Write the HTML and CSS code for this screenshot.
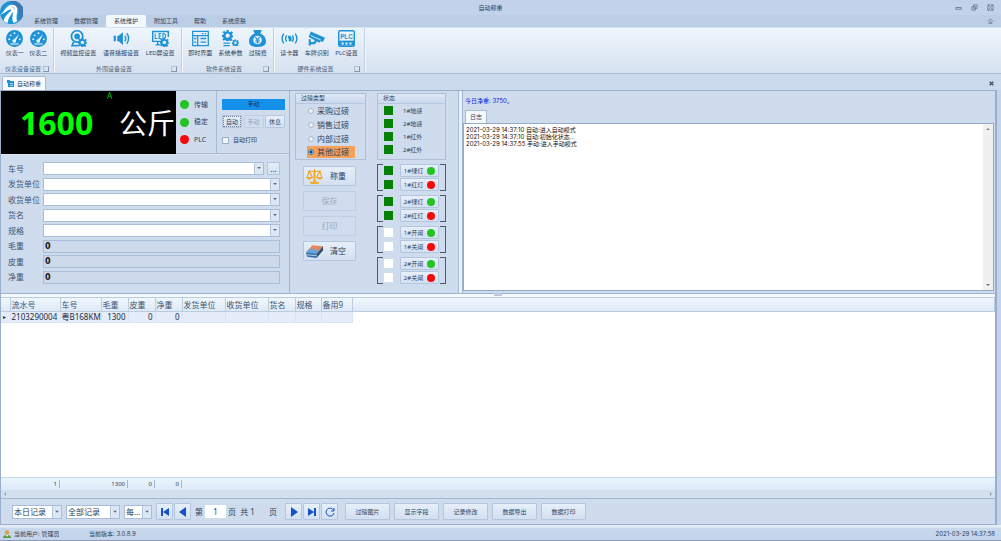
FILE: index.html
```html
<!doctype html>
<html lang="zh-CN">
<head>
	<meta charset="UTF-8">
	<title>自动称重</title>
	<link rel="stylesheet" href="styles.css">
</head>
<body>
<svg class="defs" aria-hidden="true">
	<symbol id="i-gauge" viewBox="0 0 24 24"><circle cx="12" cy="12" r="12" fill="#1f93d6"/><g fill="#e8f3fc"><circle cx="4.5" cy="13" r="1.3"/><circle cx="6.5" cy="7.5" r="1.3"/><circle cx="12" cy="4.5" r="1.3"/><circle cx="19.5" cy="13" r="1.3"/><path d="M18.5 5.5l-4.400 9.200a2.600 2.600 0 1 1-2.600-1.800z"/><path d="M6 19h12v1.500H6z"/></g></symbol>
	<symbol id="i-gear" viewBox="0 0 24 24"><path d="M9.500 0h5v4l2.500 1 3-2.500L23.500 6 21 9l1 2.500h2v4h-3l-1 2.500 2 3-3 3-3-2-2 1v1h-5v-2l-2.500-1-3 2L1 20l2-3-1-2H0v-5h3l1-2.500L1 5l3.500-3.500L7.500 4l2-1z" fill="#1f93d6"/><circle cx="12" cy="12" r="4.500" fill="#eaf2fb"/></symbol>
	<symbol id="i-cam" viewBox="0 0 24 24"><circle cx="10" cy="9" r="8" fill="none" stroke="#1f93d6" stroke-width="2.500"/><circle cx="10" cy="9" r="4" fill="#1f93d6"/><path d="M5 17l-2 5h9" fill="none" stroke="#1f93d6" stroke-width="2.500"/><use href="#i-gear" x="11" y="11" width="13" height="13"/></symbol>
	<symbol id="i-sound" viewBox="0 0 24 24"><path d="M1 8h3v8H1zM6 8h2l6-5v18l-6-5H6z" fill="#1f93d6"/><path d="M16.500 8q3 4 0 8M19.500 4.500q5 7.500 0 15" fill="none" stroke="#1f93d6" stroke-width="2"/></symbol>
	<symbol id="i-led" viewBox="0 0 24 24"><path d="M13 16H1V2h22v8M5 21h7M8 16v5" fill="none" stroke="#1f93d6" stroke-width="2"/><path d="M4.500 5v7H8M13 5h-3v7h3M10 8.500h3M15.500 5v7c5 0 5-7 0-7z" fill="none" stroke="#1f93d6" stroke-width="1.500"/><use href="#i-gear" x="11" y="11" width="13" height="13"/></symbol>
	<symbol id="i-form" viewBox="0 0 24 24"><path d="M1 2h22v20H1zM1 8h22M8 8v14M12 12h8M12 17h8M3 12h3M3 17h3M14 5h2M18 5h2" fill="none" stroke="#1f93d6" stroke-width="1.800"/></symbol>
	<symbol id="i-gears" viewBox="0 0 24 24"><use href="#i-gear" x="0" y="0" width="16" height="16"/><use href="#i-gear" x="14" y="13" width="10" height="10"/><path d="M2 18.500h9M2 22h9" stroke="#1f93d6" stroke-width="1.800"/></symbol>
	<symbol id="i-fee" viewBox="0 0 24 24"><path d="M6 0h12l-2 5c5 2 8 6 8 11 0 6-5 8-12 8S0 22 0 16C0 11 3 7 8 5z" fill="#1f93d6"/><circle cx="12" cy="14" r="6" fill="#eaf2fb"/><path d="M9 10l3 4 3-4M12 14v5M9 14.500h6M9 17h6" fill="none" stroke="#1f93d6" stroke-width="1.600"/></symbol>
	<symbol id="i-reader" viewBox="0 0 24 24"><path d="M4 5Q-1 12 4 19M8 7.500q-3 4.500 0 9M16 7.500q3 4.500 0 9M20 5q5 7 0 14" fill="none" stroke="#1f93d6" stroke-width="2"/><path d="M10 8h3l2 3v5h-4v-4h-1z" fill="#1f93d6"/></symbol>
	<symbol id="i-cctv" viewBox="0 0 24 24"><path d="M4 2l20 9-3 6-3-1-2 2L1 10zM1 13h3v9H1zM4 17h4l2-3 3 1-3 5H4z" fill="#1f93d6"/><path d="M4 8l14 6" stroke="#eaf2fb" stroke-width="1.200"/></symbol>
</svg>

<header class="titlebar">
	<h1>自动称重</h1>
	<div class="winbtns">
		<button type="button" aria-label="最小化"><svg viewBox="0 0 8 8"><path d="M1 4h6v2H1z"/></svg></button>
		<button type="button" aria-label="还原"><svg viewBox="0 0 8 8"><path d="M3 1h4v4H3zM1 3h4v4H1z"/></svg></button>
		<button type="button" aria-label="关闭"><svg viewBox="0 0 8 8"><path d="M1 1h6v6H1zM1 1l6 6M7 1L1 7"/></svg></button>
	</div>
	<svg class="logo" viewBox="0 0 24 24"><circle cx="12" cy="12" r="12" fill="#1a94d6"/><path d="M9 0a12 12 0 0 1 11 21C22 12 18 5 9 0z" fill="#3c78b4"/><path d="M0 14C5 12 5 5 12 4c5 0 7 3 6 8-1 4-1 7 0 9l-4 2c-2-4-1-8 0-12-2 3-5 5-6 12l-4-2c0-5 5-8 8-12-4-1-6 4-12 5z" fill="#fff"/><path d="M12 6q3 0 3 3" fill="none" stroke="#8cc8ea" stroke-width="1"/></svg>
</header>

<nav class="tabs">
	<a href="#">系统管理</a>
	<a href="#">数据管理</a>
	<a href="#" class="cur">系统维护</a>
	<a href="#">附加工具</a>
	<a href="#">帮助</a>
	<a href="#">系统皮肤</a>
	<button type="button" class="fold" aria-label="折叠"><svg viewBox="0 0 8 8"><path d="M1 4l3-3 3 3M2 6l2-2 2 2z"/></svg></button>
</nav>

<div class="ribbon">
	<section class="rgroup meter">
		<div class="items">
			<button type="button"><svg><use href="#i-gauge"/></svg>仪表一</button>
			<button type="button"><svg><use href="#i-gauge"/></svg>仪表二</button>
		</div>
		<h2>仪表设备设置</h2>
	</section>
	<section class="rgroup device">
		<div class="items">
			<button type="button"><svg><use href="#i-cam"/></svg>视频监控设置</button>
			<button type="button"><svg><use href="#i-sound"/></svg>语音播报设置</button>
			<button type="button"><svg><use href="#i-led"/></svg>LED屏设置</button>
		</div>
		<h2>外围设备设置</h2>
	</section>
	<section class="rgroup soft">
		<div class="items">
			<button type="button"><svg><use href="#i-form"/></svg>即时界面</button>
			<button type="button"><svg><use href="#i-gears"/></svg>系统参数</button>
			<button type="button"><svg><use href="#i-fee"/></svg>过磅费</button>
		</div>
		<h2>软件系统设置</h2>
	</section>
	<section class="rgroup hard">
		<div class="items">
			<button type="button"><svg><use href="#i-reader"/></svg>读卡器</button>
			<button type="button"><svg><use href="#i-cctv"/></svg>车牌识别</button>
			<button type="button"><svg viewBox="0 0 24 24"><rect x="1" y="1" width="22" height="22" rx="2" fill="#eaf2fb" stroke="#1f93d6" stroke-width="2"/><path d="M1 15h22v7H1z" fill="#1f93d6"/><path d="M5 17.500h3v3H5zM10.500 17.500h3v3h-3zM16 17.500h3v3h-3z" fill="#eaf2fb"/><text x="12" y="12" text-anchor="middle" class="plc-text">PLC</text></svg>PLC设置</button>
		</div>
		<h2>硬件系统设置</h2>
	</section>
</div>

<div class="doctabs">
	<a href="#" class="cur"><svg viewBox="0 0 8 8"><path d="M0 0h3v1h4v6H1V3H0z" fill="#1f93d6"/><path d="M3 3.500h3M3 5.500h3" stroke="#fff" stroke-width=".6"/></svg>自动称重</a>
	<button type="button" aria-label="关闭页面"><svg viewBox="0 0 8 8"><path d="M2 2l4 4M6 2L2 6"/></svg></button>
</div>

<main>
	<div class="work">
		<div class="left">
			<div class="top">
				<div class="led">
					<span class="flag">A</span>
					<strong>1600</strong>
					<span class="unit">公斤</span>
				</div>
				<ul class="lamps">
					<li><i class="lamp on"></i>传输</li>
					<li><i class="lamp on"></i>稳定</li>
					<li><i class="lamp"></i>PLC</li>
				</ul>
				<div class="mode">
					<p>手动</p>
					<div class="modebtns">
						<button type="button" class="btn focus">自动</button>
						<button type="button" class="btn" disabled>手动</button>
						<button type="button" class="btn">休息</button>
					</div>
					<label><input type="checkbox">自动打印</label>
				</div>
			</div>
			<form class="fields">
				<div class="field"><label for="car">车号</label><select id="car"><option></option></select><button type="button" class="btn more">...</button></div>
				<div class="field"><label for="sender">发货单位</label><select id="sender"><option></option></select></div>
				<div class="field"><label for="receiver">收货单位</label><select id="receiver"><option></option></select></div>
				<div class="field"><label for="goods">货名</label><select id="goods"><option></option></select></div>
				<div class="field"><label for="spec">规格</label><select id="spec"><option></option></select></div>
				<div class="field"><label for="gross">毛重</label><input type="text" id="gross" value="0" readonly></div>
				<div class="field"><label for="tare">皮重</label><input type="text" id="tare" value="0" readonly></div>
				<div class="field"><label for="net">净重</label><input type="text" id="net" value="0" readonly></div>
			</form>
		</div>

		<div class="middle">
			<div class="ops">
				<fieldset class="box types">
					<legend>过磅类型</legend>
					<label><input type="radio" name="type">采购过磅</label>
					<label><input type="radio" name="type">销售过磅</label>
					<label><input type="radio" name="type">内部过磅</label>
					<label class="sel"><input type="radio" name="type" checked>其他过磅</label>
				</fieldset>
				<div class="actions">
					<button type="button" class="btn"><svg viewBox="0 0 16 16"><g fill="none" stroke="#f0a020" stroke-width="1"><path d="M8 1v12M2 3h12M3 3L1 9h5zM13 3l-3 6h5z"/></g><path d="M0 9h6q-3 4-6 0zM10 9h6q-3 4-6 0zM4 13h8v2H4zM7 3h2v10H7z" fill="#f5ab2c"/></svg>称重</button>
					<button type="button" class="btn" disabled>保存</button>
					<button type="button" class="btn" disabled>打印</button>
					<button type="button" class="btn"><svg viewBox="0 0 16 16"><path d="M6 2l10 1-6 7-10-1z" fill="#e08a5c"/><path d="M3 5.500l9 1-2 3.500-10-1z" fill="#6aa5dc"/><path d="M0 9l10 1v4L1 13z" fill="#2f6fae"/><path d="M10 10l6-7v4l-6 7z" fill="#344e74"/><path d="M1 11l9 1" stroke="#cfe2f4" stroke-width=".8"/></svg>清空</button>
				</div>
			</div>
			<div class="signals">
				<fieldset class="box states">
					<legend>状态</legend>
					<p><i class="sq"></i>1#地感</p>
					<p><i class="sq"></i>2#地感</p>
					<p><i class="sq"></i>1#红外</p>
					<p><i class="sq"></i>2#红外</p>
				</fieldset>
				<div class="pair">
					<p><i class="sq"></i><button type="button" class="btn">1#绿灯<i class="lamp on"></i></button></p>
					<p><i class="sq"></i><button type="button" class="btn">1#红灯<i class="lamp"></i></button></p>
				</div>
				<div class="pair">
					<p><i class="sq"></i><button type="button" class="btn">2#绿灯<i class="lamp on"></i></button></p>
					<p><i class="sq"></i><button type="button" class="btn">2#红灯<i class="lamp"></i></button></p>
				</div>
				<div class="pair">
					<p><i class="sq off"></i><button type="button" class="btn">1#开闸<i class="lamp on"></i></button></p>
					<p><i class="sq off"></i><button type="button" class="btn">1#关闸<i class="lamp"></i></button></p>
				</div>
				<div class="pair">
					<p><i class="sq off"></i><button type="button" class="btn">2#开闸<i class="lamp on"></i></button></p>
					<p><i class="sq off"></i><button type="button" class="btn">2#关闸<i class="lamp"></i></button></p>
				</div>
			</div>
		</div>

		<div class="vsplit"></div>

		<div class="right">
			<p class="today">今日净重: 3750。</p>
			<div class="logtab"><a href="#">日志</a></div>
			<div class="log">
				<textarea readonly aria-label="日志">2021-03-29 14:37:10 自动:进入自动模式
2021-03-29 14:37:10 自动:初始化状态...
2021-03-29 14:37:55 手动:进入手动模式</textarea>
				<div class="vbar"><i class="up"></i><i class="down"></i></div>
			</div>
		</div>
	</div>

	<div class="hsplit"></div>

	<div class="grid">
		<table>
			<thead>
				<tr><th class="c-mark"></th><th class="c-no">流水号</th><th class="c-car">车号</th><th class="c-num">毛重</th><th class="c-num">皮重</th><th class="c-num">净重</th><th class="c-unit">发货单位</th><th class="c-unit">收货单位</th><th class="c-num">货名</th><th class="c-spec">规格</th><th class="c-spare">备用9</th><th></th></tr>
			</thead>
			<tbody>
				<tr><td class="mark">▸</td><td>2103290004</td><td>粤B168KM</td><td class="num">1300</td><td class="num">0</td><td class="num">0</td><td></td><td></td><td></td><td></td><td></td><td class="rest"></td></tr>
			</tbody>
		</table>
		<div class="sums">
			<span class="s-no">1</span><span class="s-gross">1300</span><span class="s-num">0</span><span class="s-num">0</span>
		</div>
		<div class="hbar"><i class="prev"></i><i class="next"></i></div>
	</div>

	<div class="pager">
		<select class="day" aria-label="日期范围"><option>本日记录</option></select>
		<select class="all" aria-label="记录范围"><option>全部记录</option></select>
		<select class="per" aria-label="每页"><option>每...</option></select>
		<div class="turn">
			<button type="button" class="btn" aria-label="首页"><svg viewBox="0 0 10 10"><path d="M1 1h2v8H1zM9 1v8L3 5z"/></svg></button>
			<button type="button" class="btn" aria-label="上一页"><svg viewBox="0 0 10 10"><path d="M8 0v10L1 5z"/></svg></button>
		</div>
		<label for="page">第</label>
		<input type="text" id="page" value="1">
		<span class="total">页&nbsp; 共 1</span>
		<span class="total-end">页</span>
		<div class="turn">
			<button type="button" class="btn" aria-label="下一页"><svg viewBox="0 0 10 10"><path d="M2 0v10l7-5z"/></svg></button>
			<button type="button" class="btn" aria-label="末页"><svg viewBox="0 0 10 10"><path d="M7 1h2v8H7zM1 1v8l6-4z"/></svg></button>
			<button type="button" class="btn" aria-label="刷新"><svg viewBox="0 0 10 10"><path d="M8.500 3A4 4 0 1 0 9 6M9 1v3H6" class="line"/></svg></button>
		</div>
		<div class="cmds">
			<button type="button" class="btn">过磅图片</button>
			<button type="button" class="btn">显示字段</button>
			<button type="button" class="btn">记录修改</button>
			<button type="button" class="btn">数据导出</button>
			<button type="button" class="btn">数据打印</button>
		</div>
	</div>
</main>

<footer class="status">
	<svg viewBox="0 0 8 8"><circle cx="4" cy="2.500" r="2.200" fill="#d9a441"/><path d="M0 8q0-3 4-3t4 3z" fill="#5c9c3c"/><path d="M3 5h2L4 7z" fill="#fff"/></svg>
	<span class="user">当前用户: 管理员</span>
	<span>当前版本: 3.0.8.9</span>
	<time>2021-03-29 14:37:58</time>
</footer>
</body>
</html>
```
FILE: styles.css
```css
*{
	margin: 0;
	padding: 0;
	box-sizing: border-box;
}
body {
	height: 100vh;
	display: flex;
	flex-direction: column;
	overflow: hidden;
	background: #c3d3ea;
	color: #2b3f5c;
	font: 6px/8px "Noto Sans", "Noto Sans CJK SC", sans-serif;
}
button, input, select, textarea {
	font: inherit;
	color: inherit;
}
button {
	border: 0;
	background: none;
}
a {
	color: inherit;
	text-decoration: none;
}
ul {
	list-style: none;
}
svg {
	display: block;
	flex: none;
}
.defs {
	position: absolute;
	width: 0;
	height: 0;
}
.plc-text {
	font: bold 9px "Liberation Sans", sans-serif;
	fill: #1f93d6;
}

/* title */
.titlebar {
	position: relative;
	height: 15px;
	display: flex;
	align-items: center;
	background: #c1d2ea;
}
.titlebar h1 {
	flex: 1;
	padding-left: 26px;
	text-align: center;
	font-size: 6px;
	font-weight: normal;
}
.winbtns {
	display: flex;
	gap: 9px;
	padding-right: 7px;
}
.winbtns svg, .fold svg, .doctabs button svg {
	width: 7px;
	height: 7px;
	fill: none;
	stroke: #6b7a90;
	stroke-width: 1;
}
.doctabs button svg {
	stroke: #4c5a70;
	stroke-width: 2;
}
.logo {
	position: absolute;
	left: 0;
	top: 1px;
	width: 23px;
	height: 23px;
}

/* ribbon */
.tabs {
	display: flex;
	height: 12px;
	padding: 0 7px 0 26px;
	background: #bccde6;
}
.tabs a {
	padding: 2px 8px;
}
.tabs .cur {
	background: #f3f8fd;
	border-radius: 2px 2px 0 0;
}
.fold {
	margin-left: auto;
}
.ribbon {
	display: flex;
	height: 47px;
	border-top: 1px solid #d5e1f0;
	border-bottom: 1px solid #a9bbd3;
	background: linear-gradient(#eef5fc, #e2ebf6 50%, #d5e1f0);
}
.rgroup {
	display: flex;
	flex-direction: column;
	justify-content: space-between;
	border-right: 1px solid #c2d0e2;
	box-shadow: 1px 0 #f3f8fd;
}
.meter {
	width: 54px;
}
.device {
	width: 128px;
}
.soft {
	width: 92px;
}
.hard {
	width: 91px;
}
.items {
	display: flex;
	justify-content: space-around;
	padding: 2px 3px 0;
}
.items button {
	display: flex;
	flex-direction: column;
	align-items: center;
	gap: 2px;
	white-space: nowrap;
}
.items svg {
	width: 17px;
	height: 17px;
}
.rgroup h2 {
	display: flex;
	align-items: center;
	justify-content: space-between;
	padding: 0 4px 0 3px;
	font-size: 6px;
	font-weight: normal;
	color: #4a5f80;
}
.rgroup h2::before {
	content: "";
}
.rgroup h2::after {
	content: "";
	width: 4px;
	height: 4px;
	border: 1px solid #b3c0d2;
	border-right-color: #8494ab;
	border-bottom-color: #8494ab;
}

.doctabs {
	display: flex;
	justify-content: space-between;
	height: 16px;
	padding: 2px 6px 0 2px;
	background: #ccdaed;
}
.doctabs a {
	display: flex;
	align-items: center;
	gap: 2px;
	padding: 0 4px;
	background: #f8fbfe;
	border: 1px solid #a9bbd3;
	border-bottom: 0;
	border-radius: 2px 2px 0 0;
}
.doctabs a svg {
	width: 8px;
	height: 8px;
}

/* common parts */
.btn {
	display: flex;
	align-items: center;
	justify-content: center;
	background: linear-gradient(#e6effa, #d3e0f1);
	border: 1px solid #b4c6de;
	border-radius: 1px;
	white-space: nowrap;
}
.btn:disabled {
	color: #9aa8bc;
	background: #d0ddee;
	border-color: #bfcee2;
}
.lamp {
	flex: none;
	width: 8px;
	height: 8px;
	border-radius: 50%;
	background: #f80808;
}
.lamp.on {
	background: #22c322;
}
.sq {
	flex: none;
	width: 9px;
	height: 9px;
	background: #078007;
}
.sq.off {
	background: #fff;
}
select {
	appearance: none;
	height: 13px;
	padding: 0 10px 0 1px;
	border: 1px solid #a9bed8;
	border-radius: 0;
	background: #fff url("data:image/svg+xml,%3Csvg xmlns='http://www.w3.org/2000/svg' width='9' height='13'%3E%3Cpath d='M0 0h9v13H0z' fill='%23dce7f5'/%3E%3Cpath d='M0 0h1v13H0z' fill='%23b4c6de'/%3E%3Cpath d='M3 5h4L5 7z' fill='%235b6d88'/%3E%3C/svg%3E") right center no-repeat;
}

/* work area */
main {
	flex: 1;
	min-height: 0;
	display: flex;
	flex-direction: column;
	margin-right: 4px;
	border: 1px solid #98aecb;
	border-right-width: 2px;
	background: #cfdced;
}
.work {
	display: flex;
	min-height: 202px;
}
.left {
	flex: none;
	width: 289px;
	display: flex;
	flex-direction: column;
	border-right: 1px solid #a0b5d1;
}
.top {
	display: flex;
	height: 63px;
}
.led {
	position: relative;
	width: 175px;
	display: flex;
	align-items: center;
	justify-content: space-between;
	padding: 0 1px 0 19px;
	background: #000;
	white-space: nowrap;
}
.led strong {
	font-size: 32px;
	line-height: 40px;
	color: #0f0;
}
.flag {
	position: absolute;
	left: 106px;
	top: 1px;
	font-size: 8px;
	color: #0c0;
}
.unit {
	font-size: 28px;
	line-height: 40px;
	color: #fff;
}
.lamps {
	width: 41px;
	display: flex;
	flex-direction: column;
	justify-content: space-between;
	padding: 9px 0 9px 4px;
	border-right: 1px solid #a9bbd3;
	border-bottom: 1px solid #a9bbd3;
	font-size: 7px;
}
.lamps li {
	display: flex;
	align-items: center;
	gap: 5px;
}
.lamps .lamp {
	width: 9px;
	height: 9px;
}
.mode {
	flex: 1;
	padding: 8px 4px 0 5px;
	border-bottom: 1px solid #a9bbd3;
}
.mode p {
	height: 11px;
	line-height: 11px;
	text-align: center;
	background: #1590ea;
	color: #12365e;
}
.modebtns {
	display: flex;
	justify-content: space-between;
	margin: 5px 0 8px;
}
.modebtns .btn {
	width: 20px;
	height: 13px;
}
.modebtns .focus {
	outline: 1px dotted #6f7f96;
	outline-offset: -2px;
}
.mode label {
	display: flex;
	align-items: center;
	gap: 4px;
}
.mode input {
	appearance: none;
	width: 7px;
	height: 7px;
	border: 1px solid #9fb0c6;
	background: #f2f6fb;
}
.fields {
	flex: 1;
	display: flex;
	flex-direction: column;
	justify-content: space-between;
	padding: 7px 9px 9px 7px;
	font-size: 8px;
	border-top: 1px solid #dce6f3;
}
.field {
	display: flex;
	align-items: center;
}
.field label {
	width: 35px;
	color: #40536f;
	white-space: nowrap;
}
.field select, .field input {
	flex: 1;
	min-width: 0;
}
.field input {
	height: 13px;
	padding: 0 1px;
	border: 1px solid #a9bed8;
	background: #ccdaeb;
	color: #111;
	font-family: "DejaVu Sans", sans-serif;
	font-weight: bold;
}
.field .more {
	width: 13px;
	height: 13px;
	margin-left: 3px;
}

.middle {
	flex: none;
	display: flex;
	gap: 11px;
	width: 168px;
	padding: 2px 11px 0 5px;
}
.ops {
	width: 71px;
}
.signals {
	width: 69px;
}
.box {
	height: 67px;
	display: flex;
	flex-direction: column;
	border: 1px solid #aebfd7;
}
.box legend {
	float: left;
	width: 100%;
	height: 10px;
	padding-left: 5px;
	line-height: 9px;
	background: linear-gradient(#dfe9f6, #c9d8ec);
	border-bottom: 1px solid #b7c7dd;
}
.types label {
	display: flex;
	align-items: center;
	gap: 3px;
	width: 48px;
	height: 14px;
	margin-left: 11px;
	padding-left: 1px;
	font-size: 8px;
	white-space: nowrap;
}
.types .sel {
	height: 12px;
	background: #f4a25b;
}
.types input {
	appearance: none;
	width: 6px;
	height: 6px;
	border: 1px solid #a9b6c8;
	border-radius: 50%;
	background: #eef3fa;
}
.types input:checked {
	border-color: #3d86b8;
	background: radial-gradient(#123c5c 30%, #8cc7e8 60%);
}
.actions {
	display: flex;
	flex-direction: column;
	gap: 5px;
	padding: 6px 10px 0 8px;
}
.actions .btn {
	height: 20px;
	gap: 7px;
	font-size: 8px;
}
.actions .btn:enabled {
	justify-content: flex-start;
	padding-left: 2px;
}
.actions svg {
	width: 17px;
	height: 17px;
}
.states p {
	display: flex;
	align-items: center;
	gap: 10px;
	height: 13px;
	padding-left: 6px;
}
.pair {
	position: relative;
	display: flex;
	flex-direction: column;
	gap: 1px;
	margin-top: 4px;
	padding: 0 7px;
}
.pair::before, .pair::after {
	content: "";
	position: absolute;
	top: 0;
	bottom: 0;
	width: 5px;
	border: 1px solid #4c5a6e;
}
.pair::before {
	left: 0;
	border-right: 0;
}
.pair::after {
	right: 0;
	border-left: 0;
}
.pair p {
	display: flex;
	align-items: center;
	justify-content: space-between;
}
.pair .btn {
	width: 39px;
	height: 13px;
	gap: 4px;
}

.vsplit {
	width: 4px;
	background: #eaf1fa;
	border-left: 1px solid #a9bbd3;
}
.right {
	flex: 1;
	min-width: 0;
	display: flex;
	flex-direction: column;
	border-left: 1px solid #a0b5d1;
	padding: 6px 1px 2px 0;
}
.today {
	padding: 0 2px;
	color: #1414e6;
	font-family: Inter, "Noto Sans CJK SC", sans-serif;
}
.logtab {
	display: flex;
	padding: 5px 2px 0;
}
.logtab a {
	padding: 2px 4px;
	background: #f5f9fe;
	border: 1px solid #a9bbd3;
	border-bottom: 0;
}
.log {
	flex: 1;
	display: flex;
	border: 1px solid #94aac8;
	background: #fff;
}
.log textarea {
	flex: 1;
	resize: none;
	border: 0;
	outline: 0;
	overflow: hidden;
	padding: 2px;
	font-family: Inter, "Noto Sans CJK SC", sans-serif;
	line-height: 7px;
	color: #111;
	background: #fff;
}
.vbar {
	width: 10px;
	display: flex;
	flex-direction: column;
	align-items: center;
	justify-content: space-between;
	padding: 4px 0;
	background: #f0f0f0;
}
.up, .down {
	border: 2px solid transparent;
}
.up {
	border-top: 0;
	border-bottom-color: #8a8a8a;
}
.down {
	border-bottom: 0;
	border-top-color: #707070;
}
.hsplit {
	height: 4px;
	background: linear-gradient(#9fb2ce 1px, #f4f9fd 1px);
}
.hsplit::after {
	content: "";
	display: block;
	width: 8px;
	height: 3px;
	margin: 0 auto;
	background: #bccbdf;
}

/* records */
.grid {
	flex: 1;
	min-height: 0;
	display: flex;
	flex-direction: column;
	background: #fff;
}
table {
	width: 100%;
	table-layout: fixed;
	border-collapse: collapse;
	font-size: 8px;
}
thead {
	background: linear-gradient(#f0f6fd, #dde8f5);
}
th {
	height: 14px;
	padding: 0 1px;
	text-align: left;
	font-weight: normal;
	white-space: nowrap;
	color: #40536f;
	border: 1px solid #bccce0;
	border-left: 0;
}
.c-mark {
	width: 9px;
}
.c-no {
	width: 50px;
}
.c-car {
	width: 41px;
}
.c-num {
	width: 27px;
}
.c-unit {
	width: 43px;
}
.c-spec {
	width: 26px;
}
.c-spare {
	width: 31px;
}
td {
	height: 11px;
	padding: 0 1px;
	line-height: 10px;
	white-space: nowrap;
	background: #e4edf9;
	border-right: 1px solid #d8e4f3;
	border-bottom: 1px solid #d8e4f3;
	color: #1d2c42;
}
td.rest {
	background: #fff;
	border: 0;
}
td.mark {
	padding: 0 2px;
	font-family: "DejaVu Sans", sans-serif;
	font-size: 6px;
}
td.num {
	text-align: right;
	padding-right: 2px;
}
.sums {
	display: flex;
	height: 13px;
	margin-top: auto;
	padding: 2px 0;
	background: linear-gradient(#e9f5fb, #deeafa);
	border-top: 1px solid #c9d7e7;
}
.sums span {
	padding-right: 2px;
	text-align: right;
	border-right: 1px solid #a8b8cc;
}
.s-no {
	width: 59px;
}
.s-gross {
	width: 68px;
}
.s-num {
	width: 27px;
}
.hbar {
	display: flex;
	align-items: center;
	justify-content: space-between;
	height: 9px;
	padding: 0 3px;
	background: #d3e1ef;
	border-bottom: 1px solid #a3b6d0;
}
.prev, .next {
	border: 2px solid transparent;
}
.prev {
	border-left: 0;
	border-right-color: #8e9fb6;
}
.next {
	border-right: 0;
	border-left-color: #8e9fb6;
}

.pager {
	display: flex;
	align-items: center;
	height: 25px;
	padding-left: 11px;
	font-size: 8px;
	white-space: nowrap;
}
.pager select {
	height: 14px;
	margin-right: 4px;
}
.day {
	width: 50px;
}
.all {
	width: 54px;
}
.per {
	width: 28px;
}
.turn {
	display: flex;
	gap: 1px;
}
.turn .btn {
	width: 17px;
	height: 17px;
}
.turn svg {
	width: 10px;
	height: 10px;
	fill: #1450c8;
}
.turn .line {
	fill: none;
	stroke: #1450c8;
	stroke-width: 1;
}
.pager label {
	margin: 0 2px 0 4px;
}
.pager input {
	width: 21px;
	height: 13px;
	border: 0;
	text-align: center;
	background: #fff;
}
.total {
	width: 43px;
	padding-left: 2px;
}
.total-end {
	width: 16px;
}
.cmds {
	display: flex;
	gap: 4px;
	margin-left: 7px;
	font-size: 6px;
}
.cmds .btn {
	width: 45px;
	height: 17px;
}

.status {
	display: flex;
	align-items: center;
	height: 16px;
	padding: 2px 6px 0 3px;
	background: linear-gradient(#e3ecf7 2px, #c9d8ec 3px, #c3d3e9);
	border-bottom: 1px solid #8c9db5;
	font-family: Inter, "Noto Sans CJK SC", sans-serif;
}
.status svg {
	width: 8px;
	height: 8px;
	margin-right: 3px;
}
.user {
	width: 75px;
}
.status time {
	margin-left: auto;
}
```
